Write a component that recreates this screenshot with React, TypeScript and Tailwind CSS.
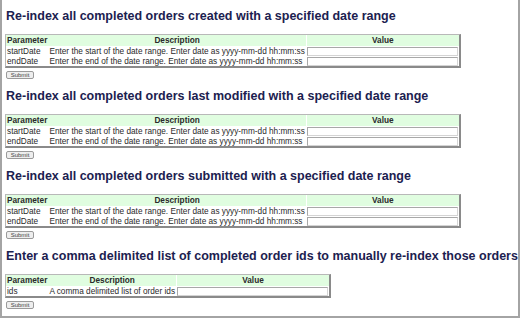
import React from "react";

type Param = { name: string; description: string };

const dateParams: Param[] = [
  {
    name: "startDate",
    description:
      "Enter the start of the date range. Enter date as yyyy-mm-dd hh:mm:ss",
  },
  {
    name: "endDate",
    description:
      "Enter the end of the date range. Enter date as yyyy-mm-dd hh:mm:ss",
  },
];

const sections: { title: string; params: Param[]; descAlign: string }[] = [
  {
    title: "Re-index all completed orders created with a specified date range",
    params: dateParams,
    descAlign: "text-left",
  },
  {
    title:
      "Re-index all completed orders last modified with a specified date range",
    params: dateParams,
    descAlign: "text-left",
  },
  {
    title:
      "Re-index all completed orders submitted with a specified date range",
    params: dateParams,
    descAlign: "text-left",
  },
  {
    title:
      "Enter a comma delimited list of completed order ids to manually re-index those orders",
    params: [{ name: "ids", description: "A comma delimited list of order ids" }],
    descAlign: "text-right",
  },
];

const ParamTable = ({
  params,
  descAlign,
}: {
  params: Param[];
  descAlign: string;
}) => (
  <table className="border-separate border-spacing-0 border-t border-l border-r-2 border-b-2 border-t-[#b8b8b8] border-l-[#b8b8b8] border-r-[#8a8a8a] border-b-[#8a8a8a] bg-white">
    <thead>
      <tr className="h-[11px] bg-[#e0fde0]">
        <th className="px-[1px] p-0 text-left font-bold leading-[11px]">
          Parameter
        </th>
        <th className="px-[1px] p-0 text-center font-bold leading-[11px]">
          Description
        </th>
        <th className="border-l border-white p-0 text-center font-bold leading-[11px]">
          Value
        </th>
      </tr>
    </thead>
    <tbody>
      {params.map((p) => (
        <tr key={p.name} className="h-[10px]">
          <td className="p-0 pl-[1px] pr-[6px] align-bottom leading-[9px]">
            {p.name}
          </td>
          <td
            className={`p-0 px-[1px] align-bottom leading-[9px] whitespace-nowrap ${descAlign}`}
          >
            {p.description}
          </td>
          <td className="p-0 px-[1px] pt-[1px] align-bottom">
            <div className="h-[9px] w-[151px] border border-t-[#a8a8a8] border-l-[#a8a8a8] border-r-[#d4d4d4] border-b-[#d4d4d4] bg-white" />
          </td>
        </tr>
      ))}
    </tbody>
  </table>
);

export default function App() {
  return (
    <div className="h-[318px] w-[520px] border-x-2 border-b-2 border-[#a4a4a4] bg-white pl-[3px] font-['Liberation_Sans',Arial,sans-serif] text-[8.25px] text-[#2a2a2a]">
      {sections.map((s, i) => (
        <section key={i} className={i === 0 ? "pt-[9px]" : "pt-[10px]"}>
          <h2 className="h-[15px] pl-[1px] text-[12.5px] leading-[15px] font-bold whitespace-nowrap text-[#1c2150]">
            {s.title}
          </h2>
          <div className="mt-[10px]">
            <ParamTable params={s.params} descAlign={s.descAlign} />
          </div>
          <button className="mt-[3px] ml-[1px] flex h-[8px] w-[28px] items-center justify-center rounded-[2px] border border-[#9a9a9a] bg-[#eeeeee] text-[6px] leading-[6px] text-[#444]">
            Submit
          </button>
        </section>
      ))}
    </div>
  );
}
